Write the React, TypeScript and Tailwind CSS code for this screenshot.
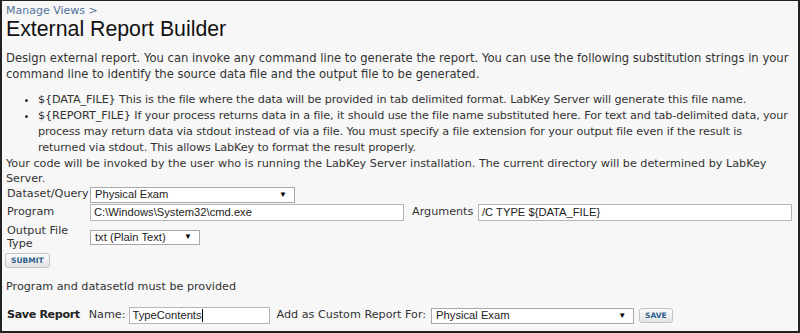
const verdana = { fontFamily: '"DejaVu Sans", Verdana, sans-serif' };

const Caret = () => <span className="text-[8px] leading-none text-black">▼</span>;

const FakeSelect = ({ value, w, h = "h-[16px]" }: { value: string; w: string; h?: string }) => (
  <div
    className={`${w} ${h} flex items-center justify-between bg-white border border-[#a9a9a9] pl-[4px] pr-[7px] text-[11.2px] text-[#222] font-['Liberation_Sans',Arial,sans-serif]`}
  >
    <span>{value}</span>
    <Caret />
  </div>
);

const FakeInput = ({ value, w, cursor }: { value: string; w: string; cursor?: boolean }) => (
  <div
    className={`${w} h-[17px] flex items-center bg-white border border-[#b5b5b5] pl-[3px] text-[11.2px] text-[#222] font-['Liberation_Sans',Arial,sans-serif]`}
  >
    <span>{value}</span>
    {cursor && <span className="w-px h-[13px] bg-black" />}
  </div>
);

const LkButton = ({ label }: { label: string }) => (
  <div className="h-[15px] px-[5px] flex items-center rounded-[3px] border border-[#c4c4c4] bg-gradient-to-b from-[#fbfbfb] to-[#e4e4e4] text-[7.5px] font-bold text-[#2e5e8e] font-['DejaVu_Sans',Verdana,sans-serif]">
    {label}
  </div>
);

export default function App() {
  return (
    <div
      className="w-[800px] h-[333px] overflow-hidden bg-[#f7f7f7] border-t border-l-2 border-r-2 border-b-2 border-[#222] text-[#333] text-[11.2px]"
      style={verdana}
    >
      <div className="pl-[4px] pt-[4px]">
        <div className="text-[11px] leading-[12px] text-[#52709a]">Manage Views &gt;</div>
        <h1 className="text-[21.3px] leading-[24px] text-[#111] font-['Liberation_Sans',Arial,sans-serif]">
          External Report Builder
        </h1>

        <p className="mt-[9px] leading-[16px] whitespace-nowrap text-[11.6px]">
          Design external report. You can invoke any command line to generate the report. You can use the following substitution strings in your
          <br />
          command line to identify the source data file and the output file to be generated.
        </p>

        <ul className="mt-[10px] pl-[32px] list-disc leading-[16px] whitespace-nowrap tracking-[-0.1px]">
          <li>${"{DATA_FILE}"} This is the file where the data will be provided in tab delimited format. LabKey Server will generate this file name.</li>
          <li>
            ${"{REPORT_FILE}"} If your process returns data in a file, it should use the file name substituted here. For text and tab-delimited data, your
            <br />
            process may return data via stdout instead of via a file. You must specify a file extension for your output file even if the result is
            <br />
            returned via stdout. This allows LabKey to format the result properly.
          </li>
        </ul>

        <p className="leading-[15px] whitespace-nowrap">
          Your code will be invoked by the user who is running the LabKey Server installation. The current directory will be determined by LabKey
          <br />
          Server.
        </p>

        <div className="flex flex-col pl-[1px]">
          <div className="h-[17px] flex items-center">
            <div className="w-[83px]">Dataset/Query</div>
            <FakeSelect value="Physical Exam" w="w-[205px]" />
          </div>
          <div className="h-[19px] flex items-center">
            <div className="w-[83px]">Program</div>
            <FakeInput value="C:\Windows\System32\cmd.exe" w="w-[314px]" />
            <div className="w-[74px] pl-[8px]">Arguments</div>
            <FakeInput value="/C TYPE ${DATA_FILE}" w="w-[314px]" />
          </div>
          <div className="h-[30px] flex items-center">
            <div className="w-[83px] leading-[13px]">
              Output File
              <br />
              Type
            </div>
            <FakeSelect value="txt (Plain Text)" w="w-[110px]" h="h-[15px]" />
          </div>
          <div className="mt-[1px] -ml-[2px] flex">
            <LkButton label="SUBMIT" />
          </div>
        </div>

        <p className="mt-[11px] leading-[16px]">Program and datasetId must be provided</p>

        <div className="mt-[12px] h-[17px] flex items-center pl-[1px]">
          <span className="font-bold text-[#222] tracking-[-0.4px]">Save Report</span>
          <span className="ml-[9px]">Name:</span>
          <div className="ml-[3px]">
            <FakeInput value="TypeContents" w="w-[141px]" cursor />
          </div>
          <span className="ml-[7px]">Add as Custom Report For:</span>
          <div className="ml-[5px]">
            <FakeSelect value="Physical Exam" w="w-[203px]" />
          </div>
          <div className="ml-[5px]">
            <LkButton label="SAVE" />
          </div>
        </div>
      </div>
    </div>
  );
}
